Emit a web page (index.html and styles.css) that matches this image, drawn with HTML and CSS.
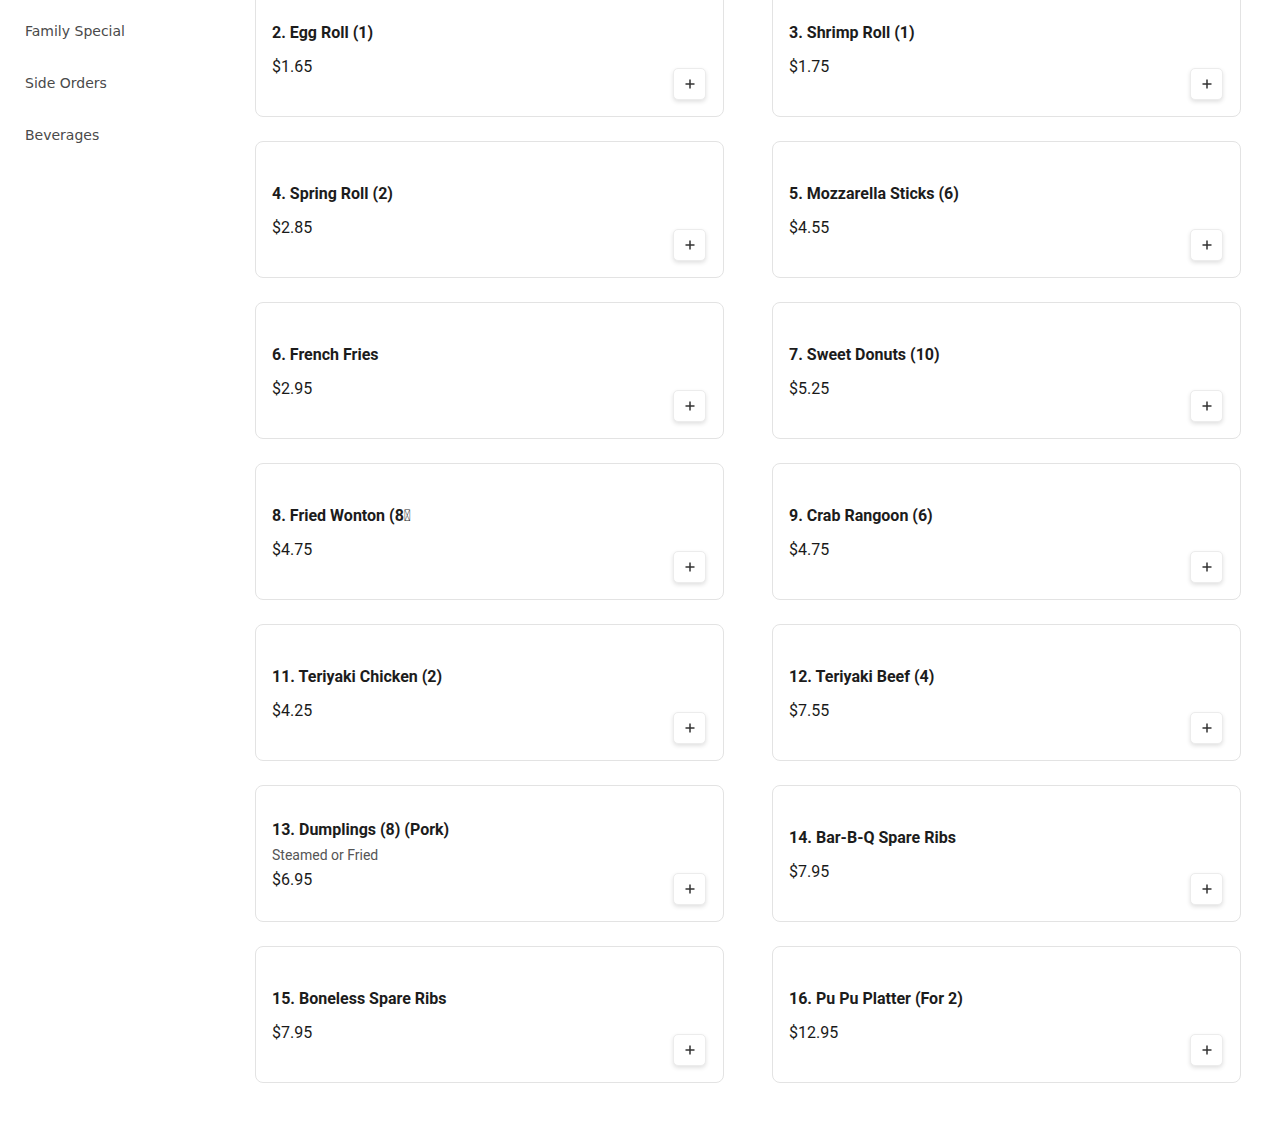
FILE: index.html
```html
<!DOCTYPE html>
<html lang="en">
<head>
<meta charset="utf-8">
<title>Menu</title>
<link rel="stylesheet" href="styles.css">
</head>
<body>
<div class="page">
  <nav class="sidebar">
    <ul class="cat-list">
      <li class="cat">Family Special</li>
      <li class="cat">Side Orders</li>
      <li class="cat">Beverages</li>
    </ul>
  </nav>
  <main class="menu">
    <div class="grid">
      <div class="card"><div class="info"><div class="title">2. Egg Roll (1)</div><div class="price">$1.65</div></div><button class="add" aria-label="Add"><svg viewBox="0 0 12 12" width="12" height="12"><path d="M6 1.5v9M1.5 6h9" stroke="#333" stroke-width="1.5" fill="none"/></svg></button></div>
      <div class="card"><div class="info"><div class="title">3. Shrimp Roll (1)</div><div class="price">$1.75</div></div><button class="add" aria-label="Add"><svg viewBox="0 0 12 12" width="12" height="12"><path d="M6 1.5v9M1.5 6h9" stroke="#333" stroke-width="1.5" fill="none"/></svg></button></div>
      <div class="card"><div class="info"><div class="title">4. Spring Roll (2)</div><div class="price">$2.85</div></div><button class="add" aria-label="Add"><svg viewBox="0 0 12 12" width="12" height="12"><path d="M6 1.5v9M1.5 6h9" stroke="#333" stroke-width="1.5" fill="none"/></svg></button></div>
      <div class="card"><div class="info"><div class="title">5. Mozzarella Sticks (6)</div><div class="price">$4.55</div></div><button class="add" aria-label="Add"><svg viewBox="0 0 12 12" width="12" height="12"><path d="M6 1.5v9M1.5 6h9" stroke="#333" stroke-width="1.5" fill="none"/></svg></button></div>
      <div class="card"><div class="info"><div class="title">6. French Fries</div><div class="price">$2.95</div></div><button class="add" aria-label="Add"><svg viewBox="0 0 12 12" width="12" height="12"><path d="M6 1.5v9M1.5 6h9" stroke="#333" stroke-width="1.5" fill="none"/></svg></button></div>
      <div class="card"><div class="info"><div class="title">7. Sweet Donuts (10)</div><div class="price">$5.25</div></div><button class="add" aria-label="Add"><svg viewBox="0 0 12 12" width="12" height="12"><path d="M6 1.5v9M1.5 6h9" stroke="#333" stroke-width="1.5" fill="none"/></svg></button></div>
      <div class="card"><div class="info"><div class="title">8. Fried Wonton (8&#xE000;</div><div class="price">$4.75</div></div><button class="add" aria-label="Add"><svg viewBox="0 0 12 12" width="12" height="12"><path d="M6 1.5v9M1.5 6h9" stroke="#333" stroke-width="1.5" fill="none"/></svg></button></div>
      <div class="card"><div class="info"><div class="title">9. Crab Rangoon (6)</div><div class="price">$4.75</div></div><button class="add" aria-label="Add"><svg viewBox="0 0 12 12" width="12" height="12"><path d="M6 1.5v9M1.5 6h9" stroke="#333" stroke-width="1.5" fill="none"/></svg></button></div>
      <div class="card"><div class="info"><div class="title">11. Teriyaki Chicken (2)</div><div class="price">$4.25</div></div><button class="add" aria-label="Add"><svg viewBox="0 0 12 12" width="12" height="12"><path d="M6 1.5v9M1.5 6h9" stroke="#333" stroke-width="1.5" fill="none"/></svg></button></div>
      <div class="card"><div class="info"><div class="title">12. Teriyaki Beef (4)</div><div class="price">$7.55</div></div><button class="add" aria-label="Add"><svg viewBox="0 0 12 12" width="12" height="12"><path d="M6 1.5v9M1.5 6h9" stroke="#333" stroke-width="1.5" fill="none"/></svg></button></div>
      <div class="card"><div class="info"><div class="title">13. Dumplings (8) (Pork)</div><div class="desc">Steamed or Fried</div><div class="price">$6.95</div></div><button class="add" aria-label="Add"><svg viewBox="0 0 12 12" width="12" height="12"><path d="M6 1.5v9M1.5 6h9" stroke="#333" stroke-width="1.5" fill="none"/></svg></button></div>
      <div class="card"><div class="info"><div class="title">14. Bar-B-Q Spare Ribs</div><div class="price">$7.95</div></div><button class="add" aria-label="Add"><svg viewBox="0 0 12 12" width="12" height="12"><path d="M6 1.5v9M1.5 6h9" stroke="#333" stroke-width="1.5" fill="none"/></svg></button></div>
      <div class="card"><div class="info"><div class="title">15. Boneless Spare Ribs</div><div class="price">$7.95</div></div><button class="add" aria-label="Add"><svg viewBox="0 0 12 12" width="12" height="12"><path d="M6 1.5v9M1.5 6h9" stroke="#333" stroke-width="1.5" fill="none"/></svg></button></div>
      <div class="card"><div class="info"><div class="title">16. Pu Pu Platter (For 2)</div><div class="price">$12.95</div></div><button class="add" aria-label="Add"><svg viewBox="0 0 12 12" width="12" height="12"><path d="M6 1.5v9M1.5 6h9" stroke="#333" stroke-width="1.5" fill="none"/></svg></button></div>
    </div>
  </main>
</div>
</body>
</html>
```
FILE: styles.css
```css
* { box-sizing: border-box; }
html, body { margin: 0; padding: 0; background: #fff; }
body { font-family: Roboto, "Liberation Sans", sans-serif; color: #1a1a1a; }

.page {
  display: flex;
  align-items: flex-start;
  padding-right: 29px;
}

.sidebar {
  width: 255px;
  flex: none;
  font-family: "DejaVu Sans", sans-serif;
}
.cat-list {
  list-style: none;
  margin: 0;
  padding: 5px 0 0 0;
}
.cat {
  padding: 16px 25px;
  line-height: 20px;
  font-size: 14px;
  color: #4a4a4a;
}

.menu { flex: 1; min-width: 0; }

.grid {
  display: grid;
  grid-template-columns: 1fr 1fr;
  column-gap: 48px;
  row-gap: 24px;
  margin-top: -20px;
}

.card {
  display: flex;
  align-items: center;
  height: 137px;
  padding: 18px 17px 16px 16px;
  border: 1px solid #e3e3e3;
  border-radius: 8px;
  background: #fff;
}
.info { flex: 1; min-width: 0; }
.title {
  font-size: 16px;
  line-height: 24px;
  font-weight: 700;
  color: #1c1c1c;
  margin-bottom: 10px;
}
.desc {
  font-size: 14px;
  line-height: 20px;
  color: #555;
  margin: -7px 0 3px;
}
.price {
  font-size: 16px;
  line-height: 24px;
  color: #1a1a1a;
}

.add {
  align-self: flex-end;
  width: 33px;
  height: 32px;
  padding: 0;
  display: flex;
  align-items: center;
  justify-content: center;
  background: #fff;
  border: 1px solid #ececec;
  border-radius: 5px;
  box-shadow: 0 2px 4px rgba(0, 0, 0, 0.12);
  cursor: pointer;
}
.add svg { display: block; }
```
